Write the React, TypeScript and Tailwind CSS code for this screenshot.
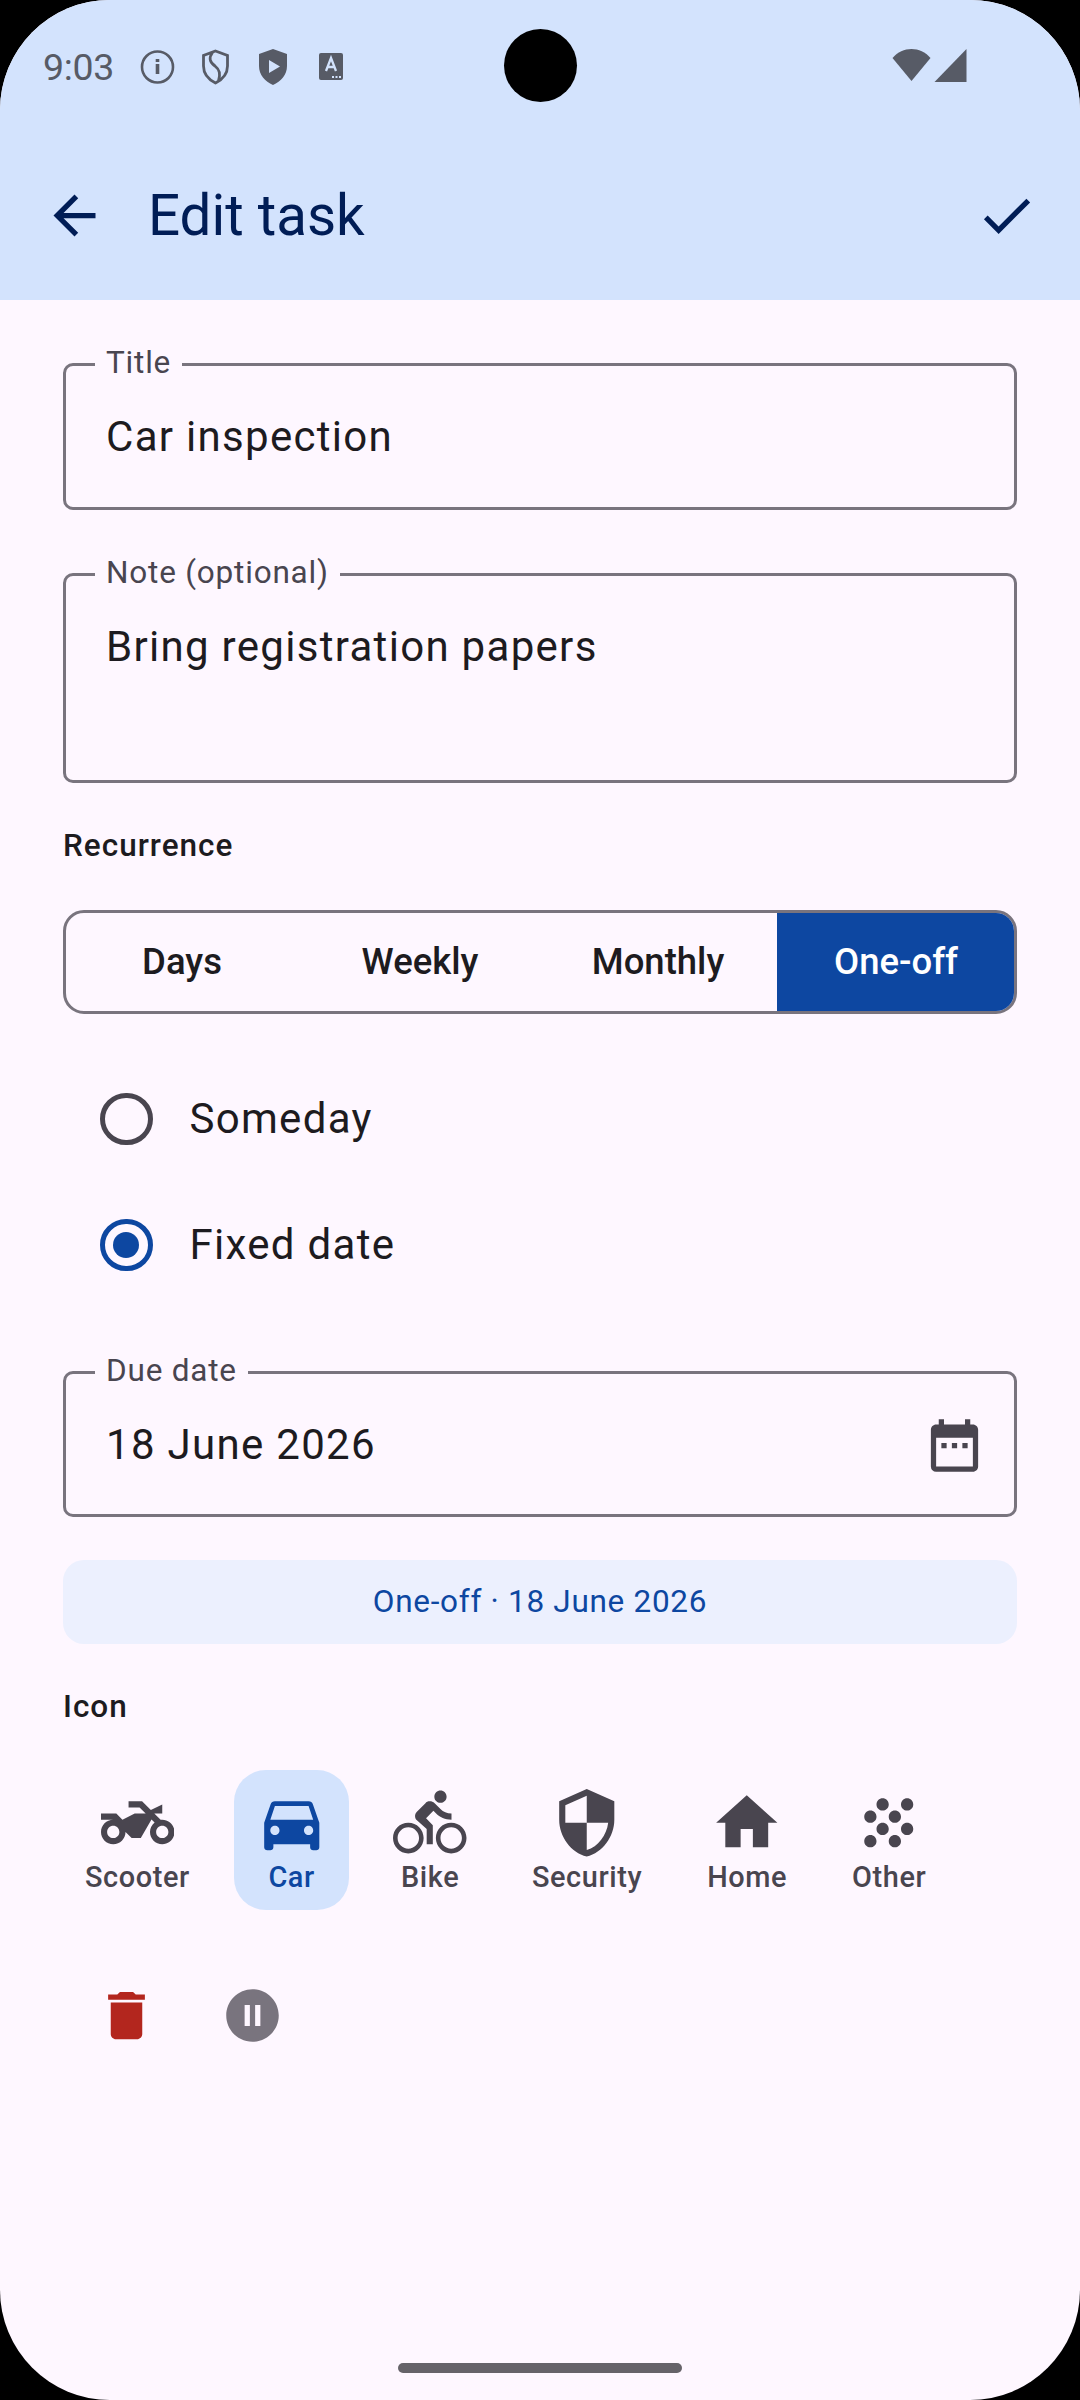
import type { ReactNode } from "react";
import {
  MdArrowBack,
  MdCheck,
  MdDateRange,
  MdDelete,
  MdDirectionsBike,
  MdDirectionsCar,
  MdGrain,
  MdHome,
  MdPauseCircleFilled,
  MdSecurity,
  MdTwoWheeler,
} from "react-icons/md";

const ICON_CHOICES = [
  { label: "Scooter", Icon: MdTwoWheeler },
  { label: "Car", Icon: MdDirectionsCar, selected: true },
  { label: "Bike", Icon: MdDirectionsBike },
  { label: "Security", Icon: MdSecurity },
  { label: "Home", Icon: MdHome },
  { label: "Other", Icon: MdGrain },
];

function StatusBar() {
  return (
    <div className="flex h-[131px] items-start pl-[43px] pr-[113px] pt-[49px] text-[#575b66]">
      <span className="w-[69px] text-[37.5px] leading-[36px] tracking-[-0.3px]">9:03</span>
      <svg viewBox="0 0 34 36" className="ml-[28px] h-[36px] w-[35px]" fill="none" stroke="currentColor">
        <circle cx="17" cy="18" r="15.5" strokeWidth="2.6" />
        <path d="M17 15v10M17 10v3" strokeWidth="3.6" />
      </svg>
      <svg viewBox="0 0 28 36" className="ml-[26px] h-[36px] w-[29px]" fill="none" stroke="currentColor" strokeWidth="2.8">
        <path d="M14 2 26 6.5V17c0 8-5 13.5-12 17C7 30.5 2 25 2 17V6.5zM11 3.5C7 9 8 13 13.5 17c5 4 5.5 8 3.5 15" />
      </svg>
      <svg viewBox="0 0 28 36" className="ml-[29px] h-[36px] w-[28px]" fill="currentColor">
        <path d="M14 0 28 5v12c0 9-6 15.5-14 19C6 32.5 0 26 0 17V5zM10 11v13l11-6.5z" fillRule="evenodd" />
      </svg>
      <svg viewBox="0 0 24 28" className="ml-[32px] mt-[4px] h-[28px] w-[24px]">
        <rect width="24" height="27" rx="2" fill="currentColor" />
        <path d="M7 18 12 5l5 13M8.5 14h7" fill="none" stroke="#d3e3fd" strokeWidth="2.3" />
        <path d="M13 24h2M16.5 24h2M20 24h2" stroke="#d3e3fd" strokeWidth="2" />
      </svg>
      <div className="ml-auto flex items-start gap-[3px]">
        <svg viewBox="0 0 38 33" className="h-[33px] w-[39px]" fill="currentColor">
          <path d="M0 9C5 3 12 0 19 0s14 3 19 9L19 32z" />
        </svg>
        <svg viewBox="0 0 32 33" className="h-[33px] w-[33px]" fill="currentColor">
          <path d="M32 0v33H0z" />
        </svg>
      </div>
    </div>
  );
}

function OutlinedField({
  label,
  height,
  children,
  trailing,
}: {
  label: string;
  height: string;
  children: ReactNode;
  trailing?: ReactNode;
}) {
  return (
    <div className={`relative rounded-[10px] border-[3px] border-[#79747e] px-[40px] ${height}`}>
      <span className="absolute left-[29px] top-[-19px] bg-[#fef7ff] px-[11px] text-[31.5px] leading-[32px] tracking-[0.8px] text-[#49454f]">
        {label}
      </span>
      {children}
      {trailing}
    </div>
  );
}

function Radio({ checked, label }: { checked?: boolean; label: string }) {
  return (
    <div className="flex h-[126px] items-center pl-[37px]">
      <span
        className={`mt-[2px] flex h-[52.5px] w-[52.5px] items-center justify-center rounded-full border-[5px] ${
          checked ? "border-[#0d47a1]" : "border-[#49454f]"
        }`}
      >
        {checked && <span className="h-[26px] w-[26px] rounded-full bg-[#0d47a1]" />}
      </span>
      <span className="ml-[37px] text-[42px] leading-[63px] tracking-[1.3px] text-[#1d1b20]">{label}</span>
    </div>
  );
}

export default function App() {
  return (
    <div className="h-[2400px] w-[1080px] bg-black font-['Roboto',sans-serif]">
      <div className="relative h-full w-full overflow-hidden rounded-[110px] bg-[#fef7ff]">
        <header className="h-[300px] bg-[#d3e3fd]">
          <StatusBar />
          <div className="flex h-[169px] items-center pl-[43px] pr-[42px] text-[#001d56]">
            <MdArrowBack className="h-[63px] w-[63px]" />
            <h1 className="ml-[42px] text-[56.5px] font-normal leading-[74px]">Edit task</h1>
            <MdCheck className="ml-auto h-[63px] w-[63px]" />
          </div>
        </header>
        <span className="absolute left-[504px] top-[29px] h-[73px] w-[73px] rounded-full bg-black" />

        <main className="px-[63px] pt-[63px]">
          <OutlinedField label="Title" height="flex h-[147px] items-center">
            <span className="text-[42px] leading-[63px] tracking-[1.3px] text-[#1d1b20]">Car inspection</span>
          </OutlinedField>

          <div className="mt-[63px]">
            <OutlinedField label="Note (optional)" height="h-[210px] pt-[39px]">
              <span className="text-[42px] leading-[63px] tracking-[1.3px] text-[#1d1b20]">
                Bring registration papers
              </span>
            </OutlinedField>
          </div>

          <p className="mt-[42px] text-[31.5px] font-medium leading-[42px] tracking-[1px] text-[#1d1b20]">
            Recurrence
          </p>

          <div className="mt-[43px] grid h-[104px] grid-cols-[repeat(3,237px)_1fr] overflow-hidden rounded-[21px] border-[3px] border-[#79747e] text-[36.5px] font-medium text-[#1d1b20]">
            <span className="flex items-center justify-center pr-[5px]">Days</span>
            <span className="flex items-center justify-center pr-[3px]">Weekly</span>
            <span className="flex items-center justify-center pr-[1px]">Monthly</span>
            <span className="flex items-center justify-center bg-[#0d47a1] pl-[1px] text-white">One-off</span>
          </div>

          <div className="mt-[41px]">
            <Radio label="Someday" />
            <Radio checked label="Fixed date" />
          </div>

          <div className="mt-[64px]">
            <OutlinedField
              label="Due date"
              height="flex h-[146px] items-center"
              trailing={<MdDateRange className="absolute right-[28px] top-[40px] h-[63px] w-[63px] text-[#49454f]" />}
            >
              <span className="text-[42px] leading-[63px] tracking-[1.3px] text-[#1d1b20]">18 June 2026</span>
            </OutlinedField>
          </div>

          <div className="mt-[43px] flex h-[84px] items-center justify-center rounded-[21px] bg-[#ecf0fe] text-[31.5px] tracking-[0.7px] text-[#0d47a1]">
            One-off · 18 June 2026
          </div>

          <p className="mt-[42px] text-[31.5px] font-medium leading-[42px] tracking-[1px] text-[#1d1b20]">
            Icon
          </p>

          <div className="ml-[1px] mt-[42px] flex gap-[23px]">
            {ICON_CHOICES.map(({ label, Icon, selected }) => (
              <div
                key={label}
                className={`flex h-[140px] flex-col items-center rounded-[32px] px-[21px] pt-[16px] ${
                  selected ? "bg-[#d3e3fd] text-[#0d47a1]" : "text-[#49454f]"
                }`}
              >
                <Icon className="h-[73.5px] w-[73.5px]" />
                <span className="text-[28.9px] font-medium leading-[34px] tracking-[0.6px]">{label}</span>
              </div>
            ))}
          </div>

          <div className="mt-[42px] flex">
            <span className="flex h-[126px] w-[126px] items-center justify-center text-[#b3261e]">
              <MdDelete className="h-[63px] w-[63px]" />
            </span>
            <span className="flex h-[126px] w-[126px] items-center justify-center text-[#79747e]">
              <MdPauseCircleFilled className="h-[63px] w-[63px]" />
            </span>
          </div>
        </main>

        <span className="absolute bottom-[27px] left-[398px] h-[10px] w-[284px] rounded-full bg-[#666369]" />
      </div>
    </div>
  );
}
